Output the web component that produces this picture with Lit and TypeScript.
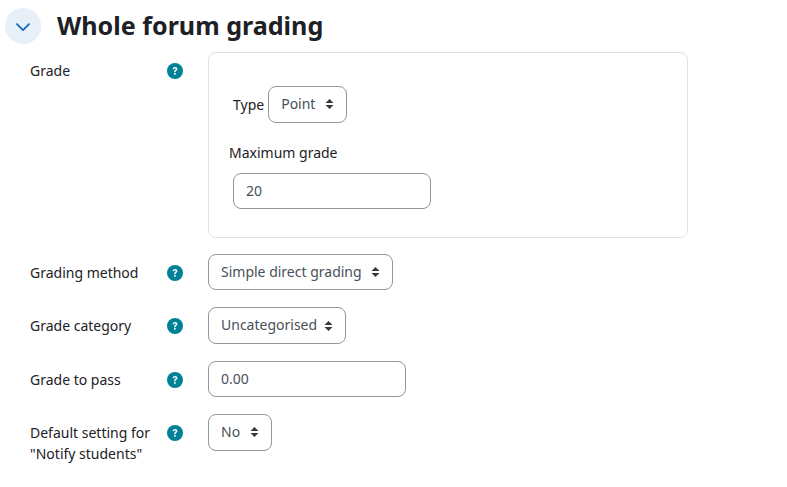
import { LitElement, css, html } from "lit";
import { customElement } from "lit/decorators.js";

const helpIcon = html`<svg class="help" viewBox="0 0 16 16" width="16" height="16">
  <circle cx="8" cy="8" r="8" fill="#008196"></circle>
  <path d="M5.700 6.300c0-1.400 1-2.300 2.400-2.300 1.300 0 2.300.8 2.300 2 0 .9-.5 1.400-1.100 1.800-.5.3-.7.5-.7 1V9.200H7.100v-.5c0-.9.4-1.400 1-1.800.4-.3.7-.5.7-.9 0-.4-.3-.7-.8-.7-.5 0-.8.3-.9.9H5.700z" fill="#fff"></path>
  <rect x="7.100" y="10" width="1.600" height="1.700" rx=".3" fill="#fff"></rect>
</svg>`;

const caret = html`<svg class="caret" viewBox="0 0 9 12" width="9" height="12">
  <path d="M4.500 1 8.500 5H.5zM4.500 11 .5 7h8z" fill="#343a40"></path>
</svg>`;

@customElement("app-root")
export class AppRoot extends LitElement {
  static styles = css`
    :host {
      display: block;
      height: 487px;
      background: #fff;
      color: #1d2125;
      font-family: "Noto Sans", "Open Sans", sans-serif;
      font-size: 14px;
      line-height: 21px;
      overflow: hidden;
    }
    .header {
      display: flex;
      align-items: center;
      gap: 16px;
      padding: 8px 0 0 5px;
      height: 36px;
    }
    .toggle {
      width: 36px;
      height: 36px;
      border-radius: 50%;
      background: #e7eff9;
      display: flex;
      align-items: center;
      justify-content: center;
    }
    .toggle svg {
      margin-top: 2px;
    }
    h3 {
      margin: 0;
      font-size: 25.100px;
      font-weight: 700;
      line-height: 36px;
      padding-bottom: 3px;
    }
    .rows {
      padding: 8px 0 0 30px;
    }
    .row {
      display: flex;
      margin-bottom: 16.900px;
    }
    .row:first-child {
      margin-bottom: 16.400px;
    }
    .label {
      width: 137px;
      padding-top: 8px;
      flex: none;
    }
    .help-cell {
      width: 41px;
      flex: none;
      padding-top: 11px;
    }
    .help {
      display: block;
    }
    .box {
      box-sizing: border-box;
      width: 480px;
      height: 185.500px;
      border: 1px solid #dee2e6;
      border-radius: 8px;
      padding: 33px 0 0 20px;
    }
    .type-row {
      display: flex;
      align-items: center;
      gap: 4px;
      padding-left: 4px;
    }
    .max-label {
      margin: 19px 0 10px;
    }
    .select,
    .input {
      box-sizing: border-box;
      height: 36.500px;
      border: 1px solid #8f959e;
      border-radius: 8px;
      color: #495057;
      display: inline-flex;
      align-items: center;
      padding: 0 12px 2px;
    }
    .select {
      justify-content: space-between;
    }
    .caret {
      margin-top: 2px;
    }
    .input {
      width: 198px;
      padding-bottom: 1px;
    }
    .indent {
      margin-left: 4px;
    }
    .w-point {
      width: 79px;
    }
    .w-method {
      width: 185px;
    }
    .w-category {
      width: 138px;
    }
    .w-notify {
      width: 64px;
    }
  `;

  private selectBox(text: string, widthClass: string) {
    return html`<div class="select ${widthClass}">${text}${caret}</div>`;
  }

  private row(label: unknown, control: unknown) {
    return html`<div class="row">
      <div class="label">${label}</div>
      <div class="help-cell">${helpIcon}</div>
      <div>${control}</div>
    </div>`;
  }

  render() {
    return html`
      <div class="header">
        <div class="toggle">
          <svg viewBox="0 0 14 9" width="14" height="9">
            <path d="M1 1.200 7 7.200l6-6" fill="none" stroke="#0f6cbf" stroke-width="1.800" stroke-linecap="round" stroke-linejoin="round"></path>
          </svg>
        </div>
        <h3>Whole forum grading</h3>
      </div>
      <div class="rows">
        ${this.row(
          "Grade",
          html`<div class="box">
            <div class="type-row">Type ${this.selectBox("Point", "w-point")}</div>
            <div class="max-label">Maximum grade</div>
            <div class="input indent">20</div>
          </div>`
        )}
        ${this.row("Grading method", this.selectBox("Simple direct grading", "w-method"))}
        ${this.row("Grade category", this.selectBox("Uncategorised", "w-category"))}
        ${this.row("Grade to pass", html`<div class="input">0.00</div>`)}
        ${this.row(html`Default setting for<br />"Notify students"`, this.selectBox("No", "w-notify"))}
      </div>
    `;
  }
}
